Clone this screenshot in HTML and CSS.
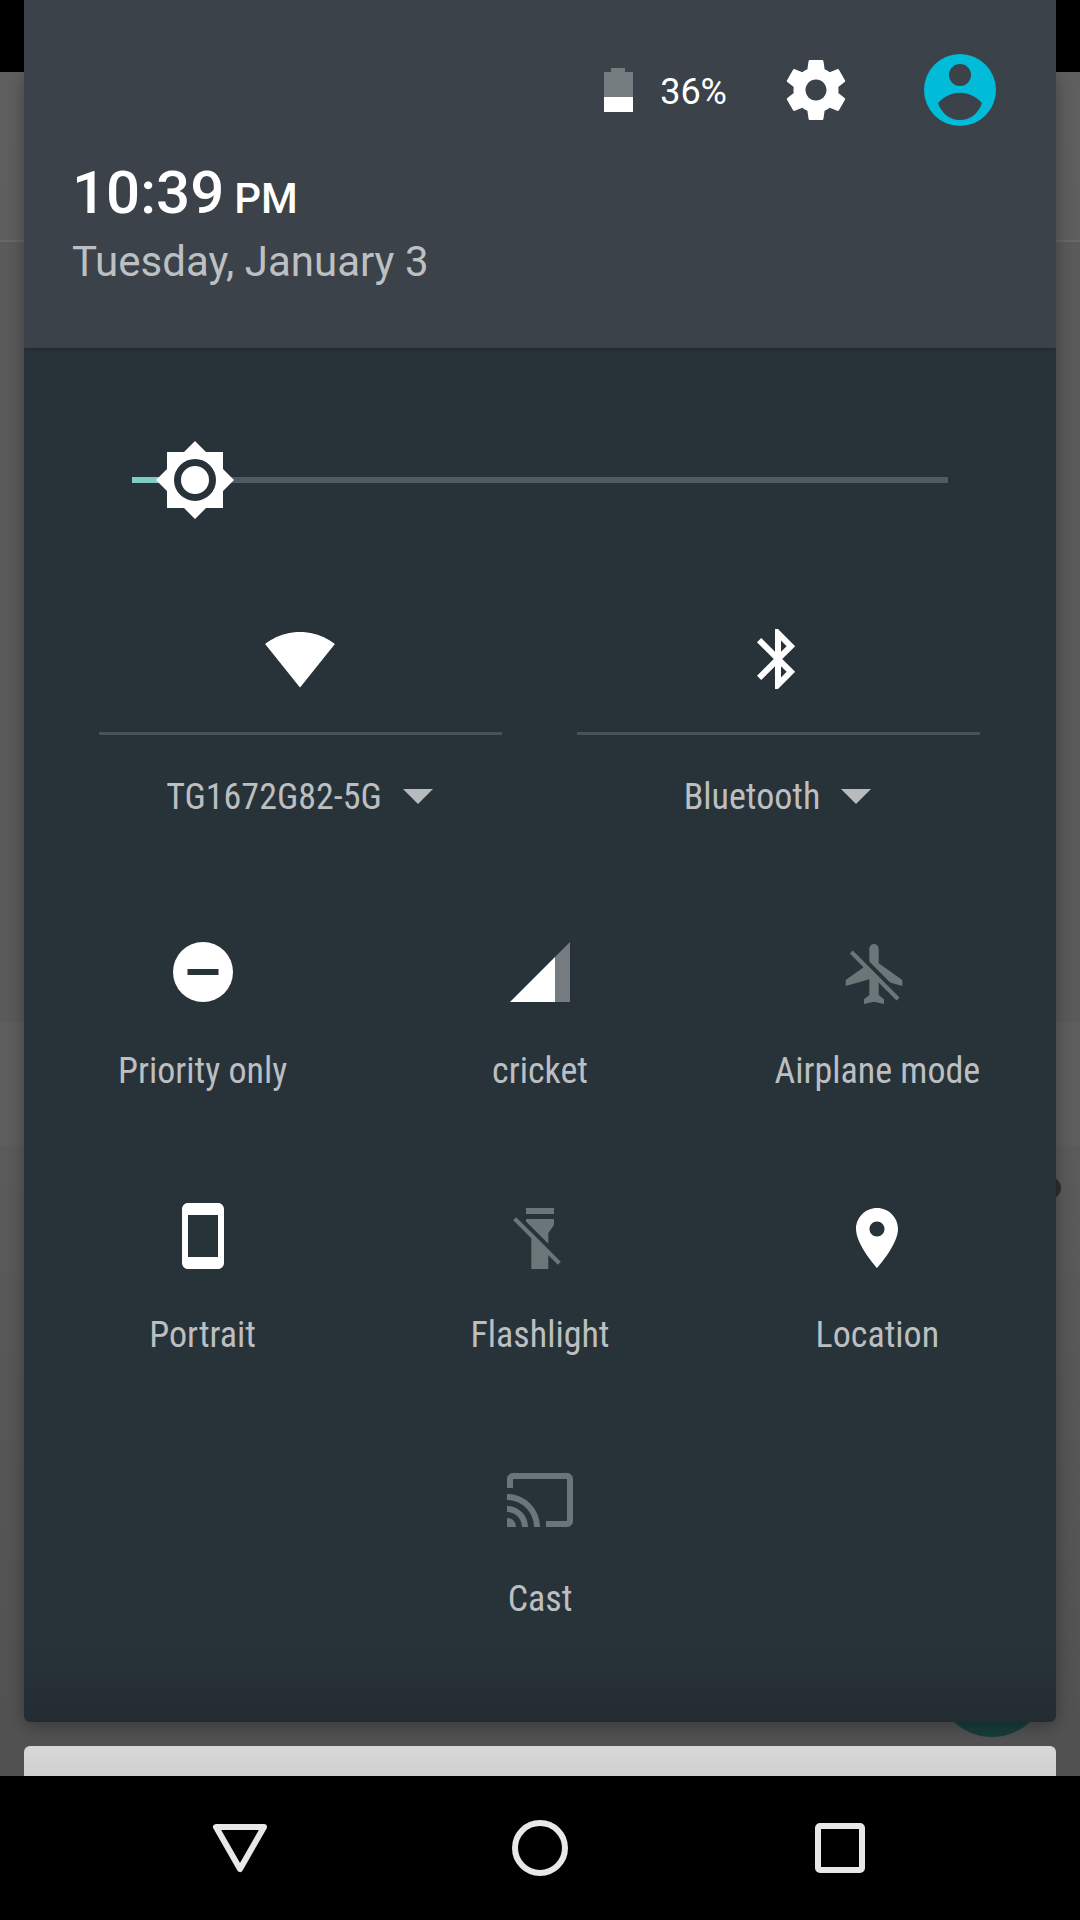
FILE: index.html
```html
<!DOCTYPE html>
<html lang="en">
<head>
<meta charset="utf-8">
<title>Quick settings</title>
<link rel="stylesheet" href="styles.css">
</head>
<body>
<div class="screen">
  <div class="backdrop">
    <div class="bd-status"></div>
    <div class="bd-main">
      <div class="bd-row bd-appbar"></div>
      <div class="bd-row bd-list"></div>
      <div class="bd-row bd-sep"></div>
      <div class="bd-card"></div>
      <div class="bd-fab"></div>
      <div class="bd-arc"></div>
    </div>
    <nav class="nav">
      <svg class="nav-icon" width="72" height="72" viewBox="0 0 72 72"><path class="nav-stroke" d="M12 15H60L36 57Z"/></svg>
      <svg class="nav-icon" width="72" height="72" viewBox="0 0 72 72"><circle class="nav-stroke" cx="36" cy="36" r="25"/></svg>
      <svg class="nav-icon" width="72" height="72" viewBox="0 0 72 72"><rect class="nav-stroke" x="14" y="14" width="44" height="44" rx="2"/></svg>
    </nav>
  </div>

  <section class="panel">
    <header class="header">
      <div class="status">
        <svg class="battery" width="29" height="44" viewBox="0 0 29 44">
          <path class="ic-dim-solid" d="M7 0H21V4H29V29H0V4H7Z"/>
          <rect class="ic-white" x="0" y="29" width="29" height="15"/>
        </svg>
        <span class="pct">36%</span>
        <svg class="icon gear" viewBox="0 0 24 24"><path class="ic-white" fill-rule="evenodd" d="M19.430 12.980c.04-.32.07-.64.07-.98s-.03-.66-.07-.98l2.110-1.650c.19-.15.24-.42.12-.64l-2-3.460c-.12-.22-.39-.3-.61-.22l-2.490 1c-.52-.4-1.080-.73-1.690-.98l-.38-2.650C14.460 2.180 14.250 2 14 2h-4c-.25 0-.46.18-.49.42l-.38 2.650c-.61.25-1.170.59-1.690.98l-2.490-1c-.23-.09-.49 0-.61.22l-2 3.460c-.13.22-.07.49.12.64l2.110 1.650c-.04.32-.07.65-.07.98s.03.66.07.98l-2.110 1.650c-.19.15-.24.42-.12.64l2 3.460c.12.22.39.3.61.22l2.490-1c.52.4 1.080.73 1.690.98l.38 2.650c.03.24.24.42.49.42h4c.25 0 .46-.18.49-.42l.38-2.650c.61-.25 1.170-.59 1.690-.98l2.490 1c.23.09.49 0 .61-.22l2-3.460c.12-.22.07-.49-.12-.64l-2.110-1.650zM12 15.500c-1.930 0-3.500-1.570-3.500-3.500s1.570-3.500 3.500-3.500 3.500 1.570 3.500 3.500-1.570 3.500-3.500 3.500z"/></svg>
        <svg class="icon avatar" viewBox="0 0 72 72">
          <circle class="av-bg" cx="36" cy="36" r="36"/>
          <circle class="av-fg" cx="36" cy="21" r="11"/>
          <path class="av-fg" d="M14 49C19 43 27 38.700 36 38.700S53 43 58 49C54 60 46 66 36 66S18 60 14 49Z"/>
        </svg>
      </div>
      <div class="clock"><span class="time">10:39</span><span class="ampm">PM</span></div>
      <div class="date">Tuesday, January 3</div>
    </header>

    <div class="body">
      <div class="slider">
        <div class="track"><div class="track-fill"></div></div>
        <svg class="thumb" width="78" height="78" viewBox="0 0 78 78">
          <path class="ic-white" d="M39 0L50 11H67V28L78 39L67 50V67H50L39 78L28 67H11V50L0 39L11 28V11H28Z"/>
          <circle class="ring" cx="39" cy="39" r="17.500"/>
        </svg>
      </div>

      <div class="big-tiles">
        <div class="big-tile">
          <svg class="icon big-icon" viewBox="0 0 24 24"><path class="ic-white" d="M12.010 21.490L23.640 7c-.45-.34-4.930-4-11.640-4C5.280 3 .81 6.660.36 7l11.630 14.490.01.01.01-.01z"/></svg>
          <div class="rule"></div>
          <div class="big-label"><span class="label">TG1672G82-5G</span><svg class="caret" width="30" height="15" viewBox="0 0 30 15"><path d="M0 0H30L15 15Z"/></svg></div>
        </div>
        <div class="big-tile">
          <svg class="icon big-icon" viewBox="0 0 24 24"><path class="ic-white" fill-rule="evenodd" d="M17.710 7.710L12 2h-1v7.590L6.410 5 5 6.410 10.590 12 5 17.590 6.410 19 11 14.410V22h1l5.710-5.710-4.300-4.290 4.300-4.290zM13 5.830l1.880 1.880L13 9.590V5.830zm1.880 10.460L13 18.170v-3.760l1.880 1.880z"/></svg>
          <div class="rule"></div>
          <div class="big-label"><span class="label">Bluetooth</span><svg class="caret" width="30" height="15" viewBox="0 0 30 15"><path d="M0 0H30L15 15Z"/></svg></div>
        </div>
      </div>

      <div class="tiles">
        <div class="tile">
          <svg class="icon" viewBox="0 0 72 72"><circle class="ic-white" cx="36" cy="36" r="30"/><rect class="ic-cut" x="20.500" y="33" width="31" height="6"/></svg>
          <span class="label">Priority only</span>
        </div>
        <div class="tile">
          <svg class="icon" viewBox="0 0 72 72"><path class="ic-dim-solid" d="M51 21L66 6V66H51Z"/><path class="ic-white" d="M6 66L51 21V66Z"/></svg>
          <span class="label">cricket</span>
        </div>
        <div class="tile">
          <svg class="icon" viewBox="0 0 72 72">
            <path class="ic-dim" d="M28.300 12.700A4.700 4.700 0 0 1 37.700 12.700V27.300L61.300 44V50L37.700 43.300V59L43 63.300V68L33 65.700L23 68V63.300L28.300 59V43.300L4.700 50V44L28.300 27.300Z"/>
            <path class="slash-gap" d="M13 13.300L59.700 60.300"/>
            <path class="slash" d="M10.300 16L57 63"/>
          </svg>
          <span class="label">Airplane mode</span>
        </div>
        <div class="tile">
          <svg class="icon" viewBox="0 0 24 24"><path class="ic-white" fill-rule="evenodd" d="M17 1.010L7 1c-1.100 0-1.990.9-1.990 2v18c0 1.100.89 2 1.990 2h10c1.100 0 2-.9 2-2V3c0-1.100-.9-1.990-2-1.990zM17 19H7V5h10v14z"/></svg>
          <span class="label">Portrait</span>
        </div>
        <div class="tile">
          <svg class="icon" viewBox="0 0 72 72">
            <rect class="ic-dim" x="22" y="8" width="28" height="6"/>
            <path class="ic-dim" d="M22 19H50V25L44.300 33V69H27.300V33L22 25Z"/>
            <path class="slash-gap" d="M13.400 16L58 60.500"/>
            <path class="slash" d="M10.700 18.700L55.300 63.200"/>
          </svg>
          <span class="label">Flashlight</span>
        </div>
        <div class="tile">
          <svg class="icon" viewBox="0 -0.670 24 24"><path class="ic-white" fill-rule="evenodd" d="M12 2C8.130 2 5 5.130 5 9c0 5.250 7 13 7 13s7-7.750 7-13c0-3.870-3.130-7-7-7zm0 9.500c-1.380 0-2.500-1.120-2.500-2.500s1.120-2.500 2.500-2.500 2.500 1.120 2.500 2.500-1.120 2.500-2.500 2.500z"/></svg>
          <span class="label">Location</span>
        </div>
        <div class="tile tile-center">
          <svg class="icon" viewBox="0 0 24 24"><path class="ic-dim" d="M21 3H3c-1.100 0-2 .9-2 2v3h2V5h18v14h-7v2h7c1.100 0 2-.9 2-2V5c0-1.100-.9-2-2-2zM1 18v3h3c0-1.660-1.340-3-3-3zm0-4v2c2.760 0 5 2.240 5 5h2c0-3.870-3.130-7-7-7zm0-4v2c4.970 0 9 4.030 9 9h2c0-6.080-4.930-11-11-11z"/></svg>
          <span class="label">Cast</span>
        </div>
      </div>
    </div>
  </section>
</div>
</body>
</html>
```
FILE: styles.css
```css
* { box-sizing: border-box; }
html, body { margin: 0; padding: 0; }
body { width: 1080px; height: 1920px; overflow: hidden; font-family: Roboto, "Liberation Sans", sans-serif; background: #000; }

.screen { position: relative; width: 1080px; height: 1920px; }

/* dimmed app behind the shade */
.backdrop { display: flex; flex-direction: column; height: 100%; }
.bd-status { height: 72px; background: #000; flex: none; }
.bd-main { position: relative; flex: 1; display: flex; flex-direction: column; overflow: hidden;
  background: linear-gradient(#5f5f5f, #5c5c5c 60%, #505150); }
.bd-row { flex: none; }
.bd-appbar { height: 170px; border-bottom: 2px solid #686868; }
.bd-list { height: 780px; background: #5a5a5a; }
.bd-sep { height: 124px; background: #5e5e5e; }
.bd-card { margin: auto 24px 0; height: 30px; flex: none; border-radius: 6px 6px 0 0; background: linear-gradient(#d8d8d8, #d0d0d0); }
.bd-fab { position: absolute; left: 936px; top: 1553px; width: 112px; height: 112px; border-radius: 50%; background: #1a3d3c; }
.bd-arc { position: absolute; left: 1039px; top: 1105px; width: 22px; height: 22px; border-radius: 50%; border: 5px solid #2e2e2e; }

.nav { height: 144px; flex: none; background: #000; display: flex; justify-content: space-between; padding: 0 204px; align-items: center; position: relative; }
.nav-icon { display: block; flex: none; }
.nav-stroke { fill: none; stroke: #e8e8e8; stroke-width: 6; stroke-linejoin: round; }

/* the shade */
.panel { position: absolute; left: 24px; top: 0; width: 1032px; height: 1722px; display: flex; flex-direction: column;
  border-radius: 0 0 6px 6px; overflow: hidden; }
.screen::after { content: ""; position: absolute; left: 24px; top: 72px; width: 1032px; height: 1650px; border-radius: 6px;
  box-shadow: 0 4px 18px rgba(0, 0, 0, .32); pointer-events: none; }

.header { height: 348px; flex: none; background: #3b4249; padding: 54px 60px 0 48px; color: #fff; position: relative; z-index: 1;
  box-shadow: 0 1px 4px rgba(0, 0, 0, .25); }
.status { display: flex; align-items: center; justify-content: flex-end; height: 72px; }
.battery { display: block; flex: none; margin-right: 27px; }
.pct { font-size: 36px; line-height: 76px; height: 72px; margin-right: 53px; color: #fff; }
.gear { margin-right: 72px; }
.av-bg { fill: #00bcd9; }
.av-fg { fill: #3b4249; }

.clock { margin-top: 33px; height: 68px; line-height: 68px; white-space: nowrap; font-weight: 500; }
.time { font-size: 60px; }
.ampm { font-size: 42px; margin-left: 10px; }
.date { margin-top: 7px; font-size: 42px; line-height: 56px; color: #bdc0c3; white-space: nowrap; }

.body { flex: 1; background: linear-gradient(#283339 0, #283339 1290px, #232c32 100%); display: flex; flex-direction: column; min-height: 0; }

.icon { display: block; width: 72px; height: 72px; flex: none; }
.big-icon { margin-right: 2px; }
.ic-white { fill: #fff; }
.ic-dim { fill: #6c7578; }
.ic-dim-solid { fill: #757c7f; }
.ic-cut { fill: #283339; }
.slash { fill: none; stroke: #6c7578; stroke-width: 4.2; }
.slash-gap { fill: none; stroke: #283339; stroke-width: 4.500; }

.slider { position: relative; margin: 93px 0 0 108px; width: 816px; height: 78px; display: flex; align-items: center; flex: none; }
.track { width: 100%; height: 6px; background: #4f5b61; }
.track-fill { width: 30px; height: 100%; background: #80cbc4; }
.thumb { position: absolute; left: 24px; top: 0; display: block; }
.ring { fill: none; stroke: #283339; stroke-width: 7; }

.big-tiles { display: grid; grid-template-columns: 403px 403px; column-gap: 75px; margin: 104px 0 0 75px; flex: none; }
.big-tile { display: flex; flex-direction: column; align-items: center; }
.rule { width: 100%; height: 3px; background: #465258; margin-top: 37px; }
.big-label { display: flex; align-items: center; gap: 21px; height: 48px; margin-top: 38px; padding-right: 2px; }
.caret { display: block; flex: none; fill: #b8bbbd; margin-top: -2px; }

.label { display: block; font-size: 36px; line-height: 48px; color: #bcbfc1; white-space: nowrap; font-stretch: 75%; }

.tiles { display: grid; grid-template-columns: repeat(3, 1fr); grid-auto-rows: 264px; margin-top: 115px; padding: 0 10px; flex: none; }
.tile { display: flex; flex-direction: column; align-items: center; gap: 39px; }
.tile-center { grid-column: 2; }
```
